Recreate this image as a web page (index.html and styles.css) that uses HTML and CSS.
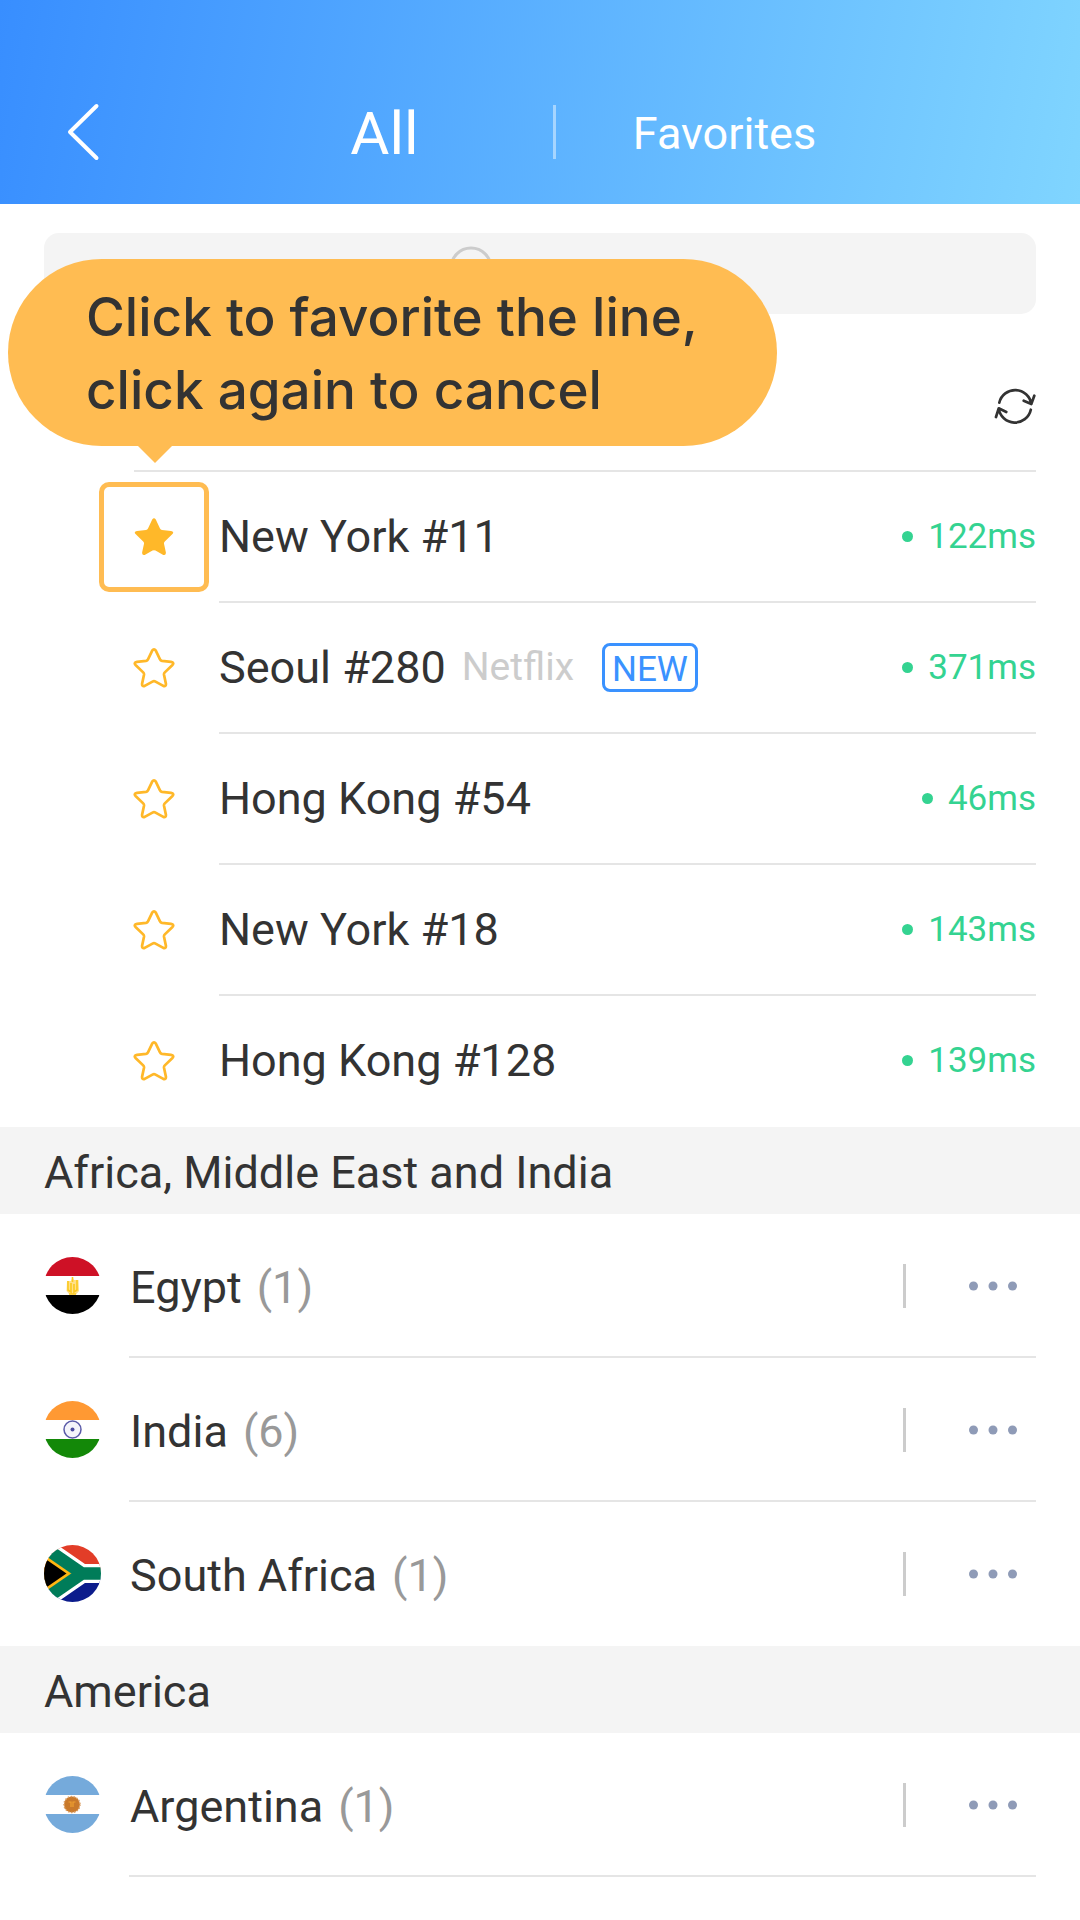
FILE: index.html
```html
<!DOCTYPE html>
<html lang="en">
<head>
<meta charset="utf-8">
<meta name="viewport" content="width=device-width, initial-scale=1">
<title>All lines</title>
<link rel="stylesheet" href="styles.css">
</head>
<body>
<svg class="defs" aria-hidden="true">
  <symbol id="star" viewBox="0 0 42 42">
    <path d="M19.2 3.6Q21 1 22.8 3.6L27 12.4Q27.6 13.6 29 13.9L38 14.9Q41.8 15.6 39.2 18.3L31.8 25.4Q30.8 26.4 31 27.8L32.9 36.6Q33.2 39.8 30.3 38.9L22.5 34.6Q21 33.8 19.5 34.6L11.7 38.9Q8.8 39.8 9.1 36.6L11 27.8Q11.2 26.4 10.2 25.4L2.8 18.3Q.2 15.6 4 14.9L13 13.9Q14.4 13.6 15 12.4Z"/>
  </symbol>
  <symbol id="dots" viewBox="0 0 48 10">
    <circle cx="4.5" cy="5" r="4.5"/><circle cx="24" cy="5" r="4.5"/><circle cx="43.5" cy="5" r="4.5"/>
  </symbol>
</svg>

<header class="topbar">
  <button class="back" type="button" aria-label="Back">
    <svg width="34" height="60" viewBox="0 0 34 60"><path d="M30.5 4L4 30L30.5 56"/></svg>
  </button>
  <nav class="tabs">
    <a class="tab tab-active" href="#all">All</a>
    <span class="tab-divider"></span>
    <a class="tab" href="#favorites">Favorites</a>
  </nav>
</header>

<main>
  <label class="search">
    <svg width="44" height="56" viewBox="0 0 44 56"><circle cx="22" cy="22" r="20"/><path d="M36 37L43 45"/></svg>
    <input type="search" aria-label="Search">
  </label>

  <section class="quick" id="all">
    <div class="quick-head">
      <button class="refresh" type="button" aria-label="Refresh">
        <svg width="42" height="42" viewBox="0 0 42 42"><path d="M5.3 17.7A16.3 16.3 0 0 1 37.3 19M29.7 15.7L37.3 19L40.3 10.7M36.8 24.7A16.3 16.3 0 0 1 4.7 23.3M12.3 27L4.7 23.3L2 32"/></svg>
      </button>
    </div>
    <ul class="lines">
      <li class="line">
        <button class="fav fav-on" type="button" aria-label="Favorite New York #11"><svg width="42" height="42"><use href="#star"/></svg></button>
        <div class="line-body"><a class="name" href="#ny11">New York #11</a><span class="ping">122ms</span></div>
        <div class="tip" role="tooltip">Click to favorite the line,<br>click again to cancel</div>
      </li>
      <li class="line">
        <button class="fav" type="button" aria-label="Favorite Seoul #280"><svg width="42" height="42"><use href="#star"/></svg></button>
        <div class="line-body"><a class="name" href="#seoul280">Seoul #280</a><span class="tag">Netflix</span><span class="badge">NEW</span><span class="ping">371ms</span></div>
      </li>
      <li class="line">
        <button class="fav" type="button" aria-label="Favorite Hong Kong #54"><svg width="42" height="42"><use href="#star"/></svg></button>
        <div class="line-body"><a class="name" href="#hk54">Hong Kong #54</a><span class="ping">46ms</span></div>
      </li>
      <li class="line">
        <button class="fav" type="button" aria-label="Favorite New York #18"><svg width="42" height="42"><use href="#star"/></svg></button>
        <div class="line-body"><a class="name" href="#ny18">New York #18</a><span class="ping">143ms</span></div>
      </li>
      <li class="line">
        <button class="fav" type="button" aria-label="Favorite Hong Kong #128"><svg width="42" height="42"><use href="#star"/></svg></button>
        <div class="line-body"><a class="name" href="#hk128">Hong Kong #128</a><span class="ping">139ms</span></div>
      </li>
    </ul>
  </section>

  <section>
    <h2 class="region">Africa, Middle East and India</h2>
    <ul class="countries">
      <li class="country">
        <svg class="flag" width="57" height="57" viewBox="0 0 57 57">
          <rect width="57" height="57" fill="#fff"/><rect width="57" height="19" fill="#ce1126"/><rect y="38" width="57" height="19"/>
          <path d="M28.5 20L30 23L34.500 23L35 34L32 37.500L25.500 37.500L22.500 34L23 24L27 24Z" fill="#ffe08a"/>
          <path d="M28.500 20v5M24 24v9l3 2v-9M33 23v10l-3 2v-8M25 37h7" fill="none" stroke="#fbc91f" stroke-width="1.600"/>
        </svg>
        <div class="country-body">
          <a class="place" href="#egypt">Egypt <span class="count">(1)</span></a>
          <span class="sep"></span>
          <button class="more" type="button" aria-label="Lines in Egypt"><svg width="48" height="10"><use href="#dots"/></svg></button>
        </div>
      </li>
      <li class="country">
        <svg class="flag" width="57" height="57" viewBox="0 0 57 57">
          <rect width="57" height="57" fill="#fff"/><rect width="57" height="19" fill="#f93"/><rect y="38" width="57" height="19" fill="#138808"/>
          <circle cx="28.500" cy="28.500" r="8.500" fill="#f4f4fa" stroke="#5a5aa8" stroke-width="1.500"/>
          <circle cx="28.500" cy="28.500" r="2" fill="#4a4aa0"/>
        </svg>
        <div class="country-body">
          <a class="place" href="#india">India <span class="count">(6)</span></a>
          <span class="sep"></span>
          <button class="more" type="button" aria-label="Lines in India"><svg width="48" height="10"><use href="#dots"/></svg></button>
        </div>
      </li>
      <li class="country">
        <svg class="flag" width="57" height="57" viewBox="0 0 57 57">
          <rect width="57" height="28.500" fill="#e23d28"/><rect y="28.500" width="57" height="28.500" fill="#0c1c8c"/>
          <path d="M-8 -3.300L38 28.500L-8 60.300M38 28.500H60" fill="none" stroke="#fff" stroke-width="19"/>
          <path d="M-8 3.500L28 28.500L-8 53.500Z" fill="#ffb612"/>
          <path d="M-8 7.500L22.500 28.500L-8 49.500Z"/>
          <path d="M-8 -3.300L38 28.500L-8 60.300M38 28.500H60" fill="none" stroke="#007c59" stroke-width="12.400"/>
        </svg>
        <div class="country-body">
          <a class="place" href="#south-africa">South Africa <span class="count">(1)</span></a>
          <span class="sep"></span>
          <button class="more" type="button" aria-label="Lines in South Africa"><svg width="48" height="10"><use href="#dots"/></svg></button>
        </div>
      </li>
    </ul>
  </section>

  <section>
    <h2 class="region">America</h2>
    <ul class="countries countries-open">
      <li class="country">
        <svg class="flag" width="57" height="57" viewBox="0 0 57 57">
          <rect width="57" height="57" fill="#fff"/><rect width="57" height="19" fill="#75aadb"/><rect y="38" width="57" height="19" fill="#75aadb"/>
          <circle cx="28" cy="28.500" r="8" fill="#c9792b"/>
          <circle cx="28" cy="28.500" r="8" fill="none" stroke="#dca066" stroke-width="1.500" stroke-dasharray="1.500 1.500"/>
          <path d="M24.500 26h2.500v5M31.500 26H29v5" fill="none" stroke="#f0a030" stroke-width="1.200"/>
        </svg>
        <div class="country-body">
          <a class="place" href="#argentina">Argentina <span class="count">(1)</span></a>
          <span class="sep"></span>
          <button class="more" type="button" aria-label="Lines in Argentina"><svg width="48" height="10"><use href="#dots"/></svg></button>
        </div>
      </li>
    </ul>
  </section>
</main>
</body>
</html>
```
FILE: styles.css
```css
* { box-sizing: border-box; }

body {
  margin: 0;
  min-height: 100vh;
  background: #fff;
  color: #333;
  font: 45px/1 Roboto, sans-serif;
}

ul { margin: 0; padding: 0; list-style: none; }
a { color: inherit; text-decoration: none; }
svg { display: block; flex: none; }

button {
  flex: none;
  padding: 0;
  border: 0;
  background: none;
  color: inherit;
  font: inherit;
}

.defs { position: absolute; width: 0; height: 0; }

/* Header */
.topbar {
  display: flex;
  height: 204px;
  padding-top: 60px;
  background: linear-gradient(100deg, #388eff, #80d5ff);
  color: #fff;
}

.back {
  display: flex;
  align-items: center;
  width: 216px;
  padding-left: 66px;
}

.back path {
  fill: none;
  stroke: #fff;
  stroke-width: 4;
  stroke-linecap: round;
  stroke-linejoin: round;
}

.tabs {
  display: flex;
  flex: 1;
  align-items: center;
  padding-right: 187px;
}

.tab {
  flex: 1;
  padding-top: 4px;
  line-height: 60px;
  text-align: center;
}

.tab-active { font-size: 60px; }

.tab-divider {
  width: 3px;
  height: 54px;
  background: rgba(255, 255, 255, .45);
}

/* Search */
.search {
  display: flex;
  align-items: center;
  justify-content: center;
  height: 81px;
  margin: 29px 44px 0;
  border-radius: 15px;
  background: #f4f4f4;
}

.search svg {
  fill: none;
  stroke: #ccc;
  stroke-width: 3;
}

.search input {
  width: 138px;
  padding: 0;
  border: 0;
  outline: 0;
  background: none;
  color: inherit;
  font: inherit;
}

/* Quick list */
.quick { padding: 28px 44px 0 0; }

.quick-head {
  display: flex;
  align-items: center;
  justify-content: flex-end;
  height: 130px;
  margin-left: 134px;
  border-bottom: 2px solid #e5e5e5;
}

.refresh path {
  fill: none;
  stroke: #333;
  stroke-width: 2.7;
  stroke-linecap: round;
  stroke-linejoin: round;
}

.line {
  position: relative;
  display: flex;
  gap: 10px;
  height: 131px;
  padding-left: 99px;
}

.fav {
  display: flex;
  align-items: center;
  justify-content: center;
  width: 110px;
  height: 110px;
  margin-top: 10px;
  border: 5px solid transparent;
  border-radius: 10px;
  fill: none;
  stroke: #ffb829;
  stroke-width: 2.7;
  stroke-linejoin: round;
}

.fav-on {
  border-color: #ffbc52;
  fill: #ffb829;
  stroke: none;
}

.line-body {
  display: flex;
  flex: 1;
  align-items: center;
  border-bottom: 2px solid #e5e5e5;
}

.line:last-child .line-body { border-color: transparent; }

.tag {
  margin-left: 16px;
  color: #ccc;
  font-size: 39px;
}

.badge {
  height: 49px;
  margin-left: 28px;
  padding: 0 7px;
  border: 3px solid #3a92ff;
  border-radius: 8px;
  color: #3a92ff;
  font-size: 35px;
  line-height: 47px;
}

.ping {
  display: flex;
  align-items: center;
  gap: 15px;
  margin-left: auto;
  color: #34d391;
  font-size: 35px;
}

.ping::before {
  content: "";
  width: 11px;
  height: 11px;
  border-radius: 50%;
  background: currentColor;
}

.tip {
  position: absolute;
  bottom: calc(100% + 26px);
  left: 8px;
  width: 769px;
  padding: 22px 78px 19px;
  border-radius: 94px;
  background: #ffbc52;
  font: 500 53px/73px Inter, sans-serif;
}

.tip::after {
  content: "";
  position: absolute;
  top: 100%;
  left: 130px;
  border: solid transparent;
  border-width: 17px 17px 0;
  border-top-color: #ffbc52;
}

/* Regions */
.region {
  margin: 0;
  padding: 5px 44px 0;
  background: #f4f4f4;
  font-size: 45px;
  font-weight: 400;
  line-height: 82px;
}

.country {
  display: flex;
  gap: 28px;
  height: 144px;
  padding: 0 44px;
}

.flag {
  margin-top: 43px;
  border-radius: 50%;
}

.country-body {
  display: flex;
  flex: 1;
  align-items: center;
  padding-top: 2px;
  border-bottom: 2px solid #e5e5e5;
}

.country:last-child .country-body { border-color: transparent; }
.countries-open .country:last-child .country-body { border-color: #e5e5e5; }

.place {
  display: flex;
  flex: 1;
  gap: 15px;
  padding: 3px 0 0 1px;
}

.count { color: #999; }

.sep {
  width: 3px;
  height: 44px;
  background: #ccc;
}

.more {
  display: flex;
  align-items: center;
  justify-content: flex-end;
  width: 130px;
  height: 100px;
  padding-right: 19px;
  fill: #8f9bb7;
}
```
